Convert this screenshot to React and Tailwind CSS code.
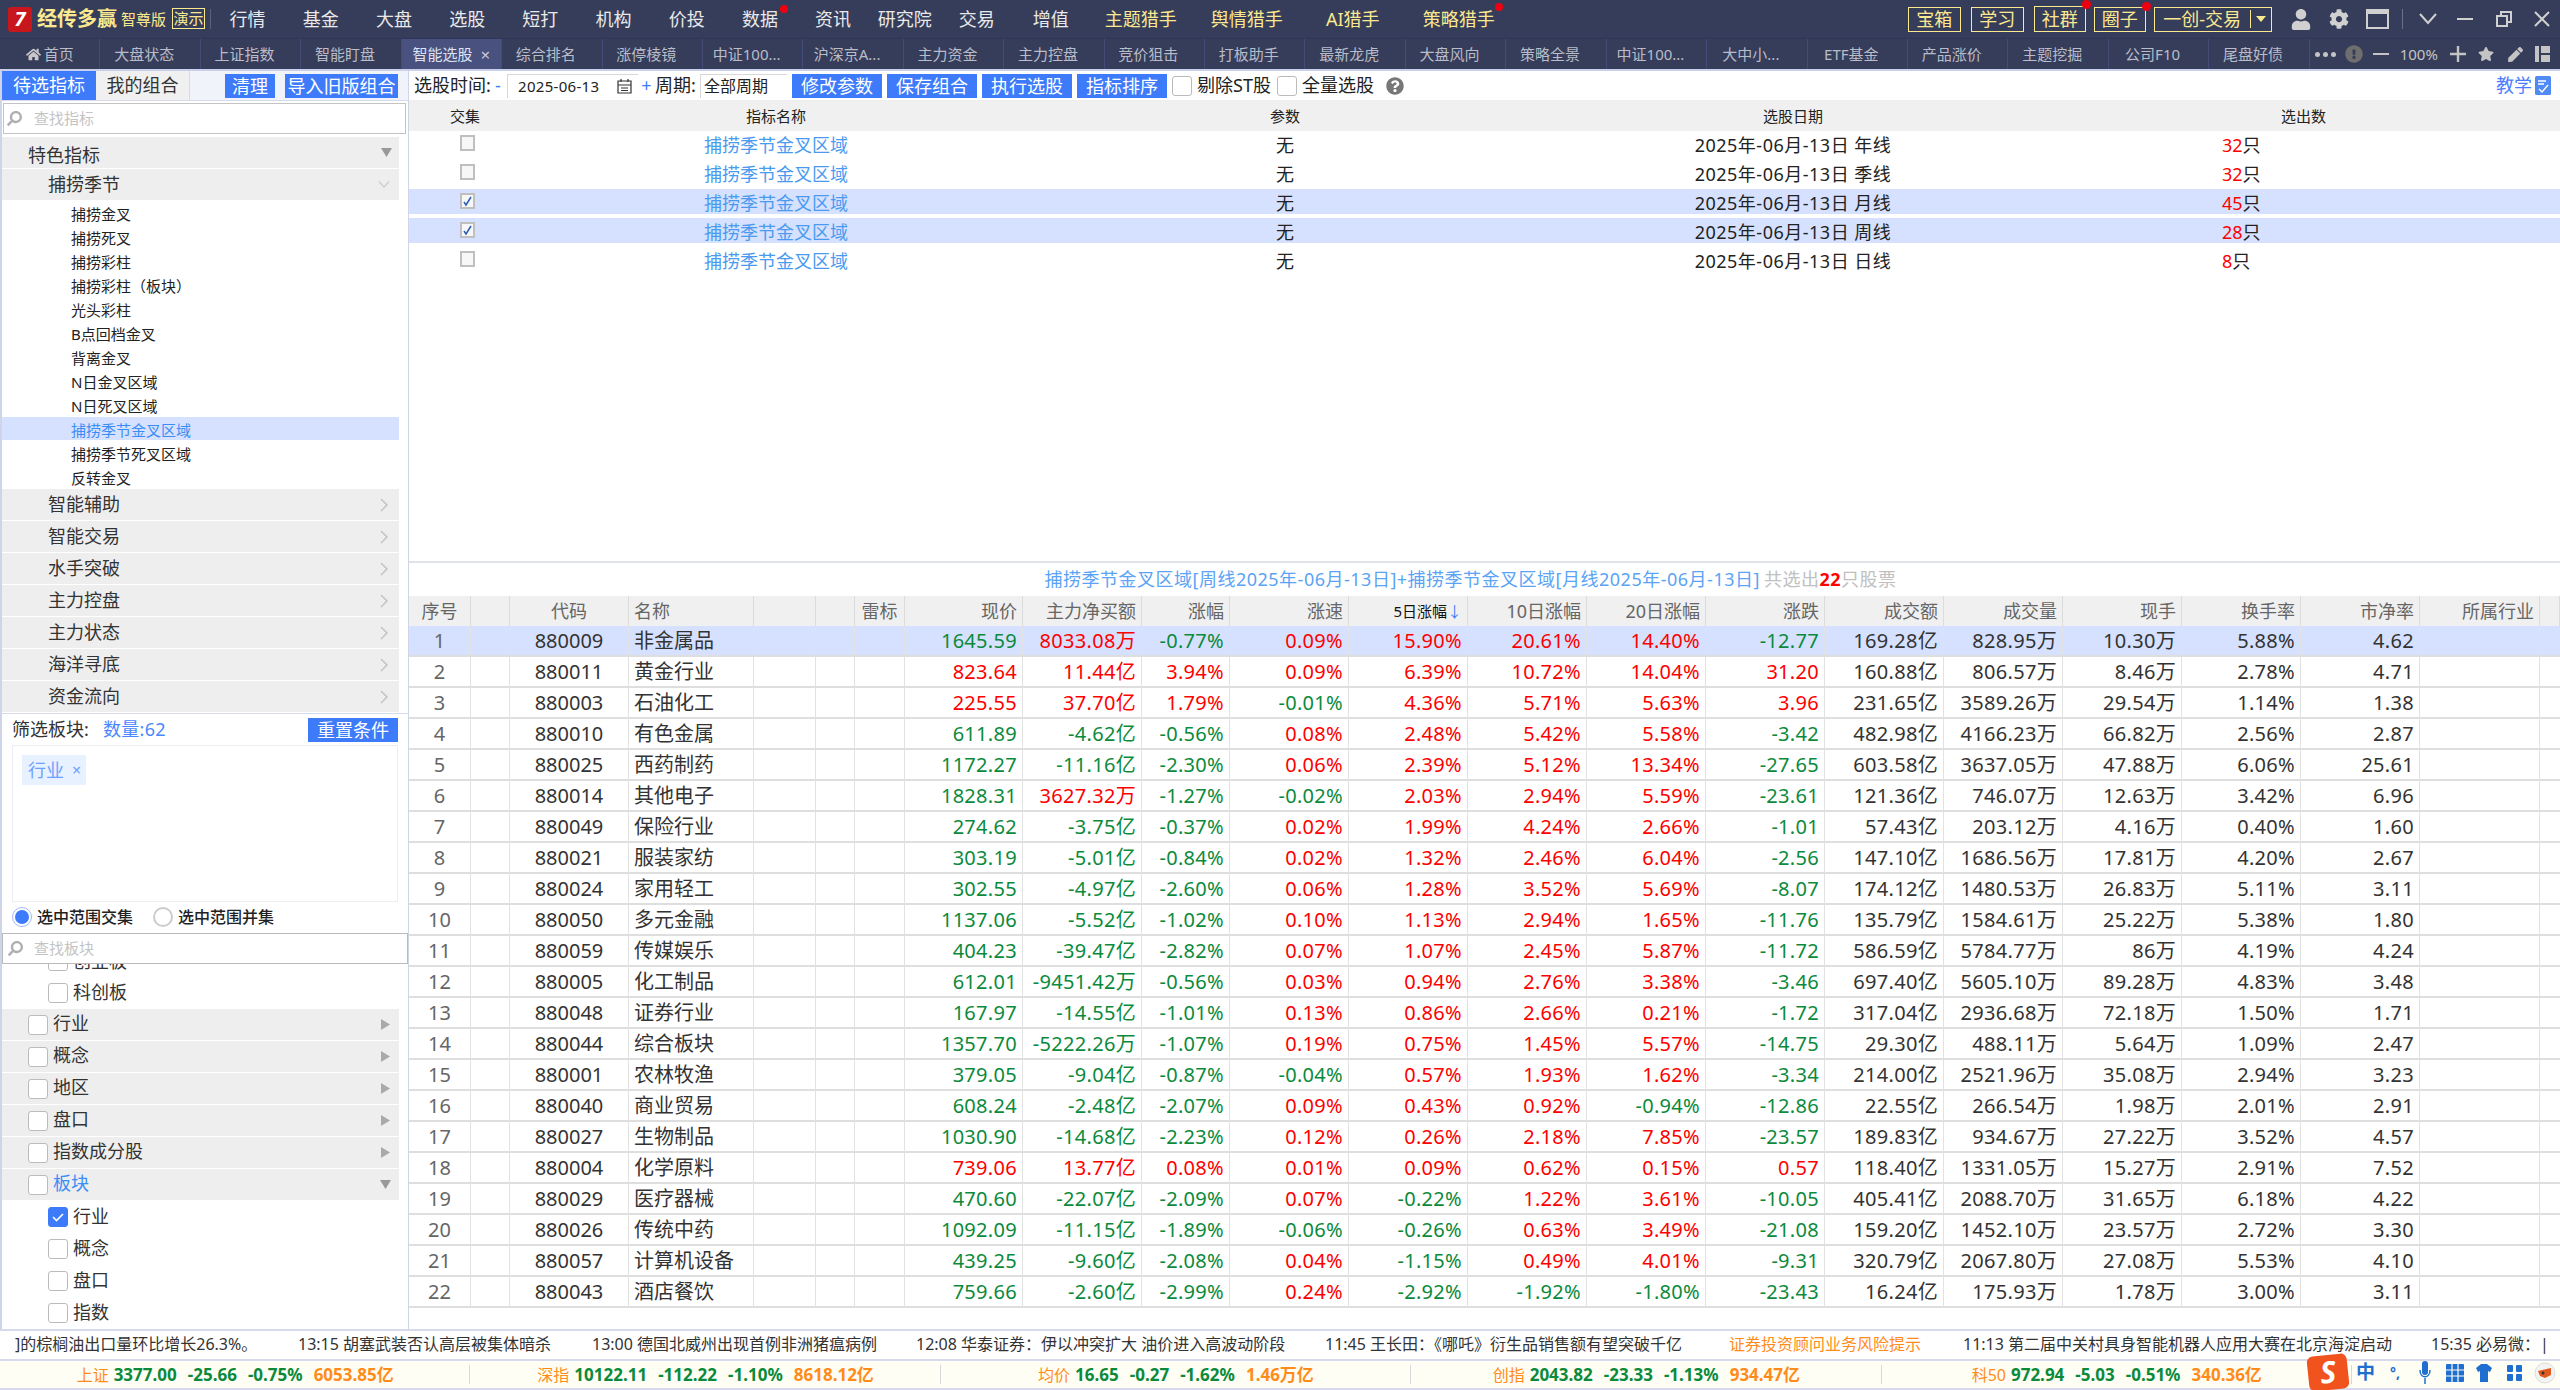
import React from "react";
import { FaCog, FaUser, FaStar, FaPen, FaHome, FaSearch, FaQuestionCircle, FaExclamationCircle } from "react-icons/fa";

const navA = ["行情", "基金", "大盘", "选股", "短打", "机构", "价投", "数据", "资讯"];
const tabs = ["首页", "大盘状态", "上证指数", "智能盯盘", "智能选股", "综合排名", "涨停棱镜", "中证100...", "沪深京A...", "主力资金", "主力控盘", "竞价狙击", "打板助手", "最新龙虎", "大盘风向", "策略全景", "中证100...", "大中小...", "ETF基金", "产品涨价", "主题挖掘", "公司F10", "尾盘好债"];
const items = ["捕捞金叉", "捕捞死叉", "捕捞彩柱", "捕捞彩柱（板块）", "光头彩柱", "B点回档金叉", "背离金叉", "N日金叉区域", "N日死叉区域", "捕捞季节金叉区域", "捕捞季节死叉区域", "反转金叉"];
const sections = ["智能辅助", "智能交易", "水手突破", "主力控盘", "主力状态", "海洋寻底", "资金流向"];
const topRows = [
  ["年线", "32", false], ["季线", "32", false], ["月线", "45", true], ["周线", "28", true], ["日线", "8", false],
];
const raw = `880009 非金属品 1645.59 8033.08万 -0.77% 0.09% 15.90% 20.61% 14.40% -12.77 169.28亿 828.95万 10.30万 5.88% 4.62
880011 黄金行业 823.64 11.44亿 3.94% 0.09% 6.39% 10.72% 14.04% 31.20 160.88亿 806.57万 8.46万 2.78% 4.71
880003 石油化工 225.55 37.70亿 1.79% -0.01% 4.36% 5.71% 5.63% 3.96 231.65亿 3589.26万 29.54万 1.14% 1.38
880010 有色金属 611.89 -4.62亿 -0.56% 0.08% 2.48% 5.42% 5.58% -3.42 482.98亿 4166.23万 66.82万 2.56% 2.87
880025 西药制药 1172.27 -11.16亿 -2.30% 0.06% 2.39% 5.12% 13.34% -27.65 603.58亿 3637.05万 47.88万 6.06% 25.61
880014 其他电子 1828.31 3627.32万 -1.27% -0.02% 2.03% 2.94% 5.59% -23.61 121.36亿 746.07万 12.63万 3.42% 6.96
880049 保险行业 274.62 -3.75亿 -0.37% 0.02% 1.99% 4.24% 2.66% -1.01 57.43亿 203.12万 4.16万 0.40% 1.60
880021 服装家纺 303.19 -5.01亿 -0.84% 0.02% 1.32% 2.46% 6.04% -2.56 147.10亿 1686.56万 17.81万 4.20% 2.67
880024 家用轻工 302.55 -4.97亿 -2.60% 0.06% 1.28% 3.52% 5.69% -8.07 174.12亿 1480.53万 26.83万 5.11% 3.11
880050 多元金融 1137.06 -5.52亿 -1.02% 0.10% 1.13% 2.94% 1.65% -11.76 135.79亿 1584.61万 25.22万 5.38% 1.80
880059 传媒娱乐 404.23 -39.47亿 -2.82% 0.07% 1.07% 2.45% 5.87% -11.72 586.59亿 5784.77万 86万 4.19% 4.24
880005 化工制品 612.01 -9451.42万 -0.56% 0.03% 0.94% 2.76% 3.38% -3.46 697.40亿 5605.10万 89.28万 4.83% 3.48
880048 证券行业 167.97 -14.55亿 -1.01% 0.13% 0.86% 2.66% 0.21% -1.72 317.04亿 2936.68万 72.18万 1.50% 1.71
880044 综合板块 1357.70 -5222.26万 -1.07% 0.19% 0.75% 1.45% 5.57% -14.75 29.30亿 488.11万 5.64万 1.09% 2.47
880001 农林牧渔 379.05 -9.04亿 -0.87% -0.04% 0.57% 1.93% 1.62% -3.34 214.00亿 2521.96万 35.08万 2.94% 3.23
880040 商业贸易 608.24 -2.48亿 -2.07% 0.09% 0.43% 0.92% -0.94% -12.86 22.55亿 266.54万 1.98万 2.01% 2.91
880027 生物制品 1030.90 -14.68亿 -2.23% 0.12% 0.26% 2.18% 7.85% -23.57 189.83亿 934.67万 27.22万 3.52% 4.57
880004 化学原料 739.06 13.77亿 0.08% 0.01% 0.09% 0.62% 0.15% 0.57 118.40亿 1331.05万 15.27万 2.91% 7.52
880029 医疗器械 470.60 -22.07亿 -2.09% 0.07% -0.22% 1.22% 3.61% -10.05 405.41亿 2088.70万 31.65万 6.18% 4.22
880026 传统中药 1092.09 -11.15亿 -1.89% -0.06% -0.26% 0.63% 3.49% -21.08 159.20亿 1452.10万 23.57万 2.72% 3.30
880057 计算机设备 439.25 -9.60亿 -2.08% 0.04% -1.15% 0.49% 4.01% -9.31 320.79亿 2067.80万 27.08万 5.53% 4.10
880043 酒店餐饮 759.66 -2.60亿 -2.99% 0.24% -2.92% -1.92% -1.80% -23.43 16.24亿 175.93万 1.78万 3.00% 3.11`;
const rows = raw.split("\n").map((l) => l.split(" "));

const grid = "grid grid-cols-[62px_39px_119px_125px_62px_39px_50px_118px_119px_88px_repeat(10,119px)_120px_20px]";
const RED = "text-[#ff0000]";
const GREEN = "text-[#0b8a3c]";
const sign = (v) => (v.startsWith("-") ? GREEN : RED);
const cellR = "border-r border-[#e2e2e2] text-right pr-[5px] whitespace-nowrap tracking-[0.3px]";

function Btn({ w, children, cls = "" }) {
  return <div className={`${w} ${cls} h-6 flex items-center justify-center bg-[#3d7bfb] text-white text-[18px] leading-none shrink-0`}>{children}</div>;
}
function Box({ checked }) {
  return (
    <span className={`w-5 h-5 rounded-[3px] border shrink-0 flex items-center justify-center ${checked ? "bg-[#3d7bfb] border-[#3d7bfb]" : "bg-white border-[#bbb]"}`}>
      {checked && (
        <svg width="14" height="14" viewBox="0 0 14 14"><path d="M2 7l3.5 3.5L12 4" stroke="#fff" strokeWidth="1.6" fill="none" /></svg>
      )}
    </span>
  );
}
function TopCheck({ checked }) {
  return (
    <span className="w-[15px] h-4 mt-1 border-2 border-[#bfbfbf] bg-[#f7f7f7] flex items-center justify-center">
      {checked && (
        <svg width="11" height="11" viewBox="0 0 11 11"><path d="M2 6l2 3 5-8" stroke="#2f5fb0" strokeWidth="1.5" fill="none" /></svg>
      )}
    </span>
  );
}
const Chevron = () => (
  <svg width="10" height="14" viewBox="0 0 10 14" className="shrink-0"><path d="M2 1l6 6-6 6" stroke="#c4c4c4" strokeWidth="1.5" fill="none" /></svg>
);
const TriRight = () => (
  <svg width="10" height="11" viewBox="0 0 10 11" className="shrink-0"><path d="M0 0l9 5.5L0 11z" fill="#aaa" /></svg>
);
const TriDown = () => (
  <svg width="11" height="9" viewBox="0 0 11 9" className="shrink-0"><path d="M0 0h11L5.5 9z" fill="#999" /></svg>
);

function Nav() {
  const gold = "text-[#fbe98f]";
  return (
    <div className="h-[38px] bg-[#363d5a] flex items-center text-[18px] text-[#e9e9e9] shrink-0">
      <div className="ml-2 w-6 h-[25px] rounded-[3px] bg-[#c8161d] flex items-center justify-center text-white font-bold italic text-[20px] leading-none shrink-0">7</div>
      <div className={`ml-[5px] text-[20px] font-bold ${gold} w-[84px] whitespace-nowrap`}>经传多赢</div>
      <div className={`text-[15px] ${gold} w-[51px] whitespace-nowrap`}>智尊版</div>
      <div className={`w-[33px] h-[21px] mb-[1px] border border-[#fbe98f] text-[15px] leading-[19px] text-center ${gold} whitespace-nowrap`}>演示</div>
      <div className="ml-[5px] w-px h-[20px] bg-[#5a6080]" />
      {navA.map((t) => (
        <div key={t} className="w-[73.2px] text-center relative shrink-0">
          {t}
          {t === "数据" && <span className="absolute right-[9px] top-[-1px] w-2 h-2 rounded-full bg-[#f0000f]" />}
        </div>
      ))}
      <div className="w-[70px] text-center shrink-0">研究院</div>
      <div className="w-[74px] text-center shrink-0">交易</div>
      <div className="w-[74px] text-center shrink-0">增值</div>
      <div className={`w-[106px] text-center shrink-0 ${gold}`}>主题猎手</div>
      <div className={`w-[106px] text-center shrink-0 ${gold}`}>舆情猎手</div>
      <div className={`w-[106px] text-center shrink-0 ${gold}`}>AI猎手</div>
      <div className={`w-[106px] text-center shrink-0 relative ${gold}`}>
        策略猎手
        <span className="absolute right-[9px] top-[-3px] w-2 h-2 rounded-full bg-[#f0000f]" />
      </div>
      <div className={`ml-[396px] w-[53px] h-[25px] border border-[#fbe98f] leading-[23px] text-center ${gold} shrink-0`}>宝箱</div>
      <div className={`ml-[10px] w-[53px] h-[25px] border border-[#fbe98f] leading-[23px] text-center ${gold} shrink-0`}>学习</div>
      <div className={`ml-[10px] w-[52px] h-[26px] border border-[#fbe98f] leading-[24px] text-center ${gold} shrink-0 relative`}>
        社群
        <span className="absolute right-[-6px] top-[-7px] w-[9px] h-[9px] rounded-full bg-[#f0000f]" />
      </div>
      <div className={`ml-2 w-[52px] h-[25px] border border-[#fbe98f] leading-[23px] text-center ${gold} shrink-0 relative`}>
        圈子
        <span className="absolute right-[-6px] top-[-6px] w-[9px] h-[9px] rounded-full bg-[#f0000f]" />
      </div>
      <div className={`ml-2 w-[118px] h-[25px] border border-[#fbe98f] flex items-center ${gold} shrink-0`}>
        <span className="w-[95px] text-center whitespace-nowrap">一创-交易</span>
        <span className="w-px h-[18px] bg-[#fbe98f]" />
        <svg width="10" height="6" viewBox="0 0 10 6" className="ml-[5px]"><path d="M0 0h10L5 6z" fill="#fbe98f" /></svg>
      </div>
      <FaUser className="ml-[19px] w-5 h-[21px] text-[#d0d0d0] shrink-0" />
      <FaCog className="ml-[18px] w-5 h-5 text-[#d0d0d0] shrink-0" />
      <div className="ml-[17px] w-[23px] h-[20px] border-2 border-t-[5px] border-[#d0d0d0] shrink-0" />
      <div className="ml-[13px] w-px h-[20px] bg-[#6a7090] shrink-0" />
      <svg width="18" height="12" viewBox="0 0 18 12" className="ml-[16px] shrink-0"><path d="M1 1l8 9 8-9" stroke="#d0d0d0" strokeWidth="2" fill="none" /></svg>
      <div className="ml-5 w-[16px] h-[2px] bg-[#d0d0d0] shrink-0" />
      <svg width="16" height="16" viewBox="0 0 16 16" className="ml-[23px] shrink-0"><path d="M1 5h10v10H1zM5 5V1h10v10h-4" stroke="#d0d0d0" strokeWidth="2" fill="none" /></svg>
      <svg width="16" height="16" viewBox="0 0 16 16" className="ml-[22px] shrink-0"><path d="M1 1l14 14M15 1L1 15" stroke="#d0d0d0" strokeWidth="2" fill="none" /></svg>
    </div>
  );
}

function Tabs() {
  return (
    <div className="h-[33px] shrink-0 bg-[#363d5a] border-t border-[#2e3658] border-b-2 border-b-[#c8d0ea] flex text-[15px] text-[#b9bcc9]">
      {tabs.map((t, i) => (
        <div key={i} className={`w-[100.43px] shrink-0 border-r border-[#434c78] flex items-center justify-center whitespace-nowrap ${i === 4 ? "bg-[#49527e] text-[#dfe3f5]" : ""} ${i !== 0 && i !== 4 ? "pr-[12px]" : ""}`}>
          {i === 0 && <FaHome className="w-[15px] h-[15px] mr-[3px] text-[#c8c8c8]" />}
          {t}
          {i === 4 && <span className="ml-[8px] text-[#c8c8d8] text-[17px] leading-none">×</span>}
        </div>
      ))}
      <div className="flex items-center text-[#c4c4c4] flex-1 pl-[5px]">
        <span className="flex gap-[3px] shrink-0">
          <i className="w-[5px] h-[5px] rounded-full bg-[#c4c4c4]" />
          <i className="w-[5px] h-[5px] rounded-full bg-[#c4c4c4]" />
          <i className="w-[5px] h-[5px] rounded-full bg-[#c4c4c4]" />
        </span>
        <FaExclamationCircle className="ml-[9px] w-[18px] h-[18px] text-[#6e6e6e] shrink-0" />
        <span className="ml-[10px] w-4 h-[2px] bg-[#c4c4c4] shrink-0" />
        <span className="ml-[11px] w-[40px] text-[15px] whitespace-nowrap">100%</span>
        <svg width="16" height="16" viewBox="0 0 16 16" className="ml-[10px] shrink-0"><path d="M8 0v16M0 8h16" stroke="#c4c4c4" strokeWidth="2.4" /></svg>
        <FaStar className="ml-3 w-4 h-4 shrink-0" />
        <FaPen className="ml-[14px] w-[15px] h-[15px] shrink-0" />
        <svg width="15" height="16" viewBox="0 0 15 16" className="ml-3 shrink-0"><path d="M0 0h4v16H0zM6 0h9v7H6zM6 9h9v7H6z" fill="#c4c4c4" /></svg>
      </div>
    </div>
  );
}

function Sidebar() {
  return (
    <div className="w-[409px] shrink-0 border-l-2 border-r border-[#d0d4e8] flex flex-col bg-white text-[#333]">
      <div className="h-[30px] shrink-0 flex items-center bg-[#f1f3fb] border-b border-[#d6daec] text-[18px]">
        <div className="w-[94px] h-full bg-[#3d7bfb] text-white flex items-center justify-center shrink-0">待选指标</div>
        <div className="w-[94px] h-full bg-[#f0f0f0] text-[#333] flex items-center justify-center border-r border-[#d6daec] shrink-0">我的组合</div>
        <Btn w="w-[50px]" cls="ml-[35px]">清理</Btn>
        <Btn w="w-[113px]" cls="ml-[10px]">导入旧版组合</Btn>
      </div>
      <div className="h-[31px] shrink-0 mt-[2px] ml-px mr-[2px] border border-[#c4c4c4] flex items-center text-[15px] text-[#c4c4c4]">
        <FaSearch className="ml-[3px] w-[15px] h-[15px] text-[#b0b0b0]" style={{ transform: "scaleX(-1)" }} />
        <span className="ml-[12px]">查找指标</span>
      </div>
      <div className="mt-[3px] mr-[9px] flex flex-col">
        <div className="h-[31px] bg-[#eeeeee] flex items-center justify-between pl-[26px] pr-[7px] text-[18px] mb-px">
          <span className="pt-[5px] leading-none">特色指标</span>
          <TriDown />
        </div>
        <div className="h-[31px] bg-[#eeeeee] flex items-center justify-between pl-[46px] pr-[9px] text-[18px] mb-px">
          <span>捕捞季节</span>
          <svg width="12" height="7" viewBox="0 0 12 7"><path d="M1 0.5l5 5.5 5-5.5" stroke="#ccc" strokeWidth="1.2" fill="none" /></svg>
        </div>
        {items.map((t) => {
          const on = t === "捕捞季节金叉区域";
          return (
            <div key={t} className={`h-[23px] mb-px pl-[69px] text-[15px] leading-[26px] whitespace-nowrap ${on ? "bg-[#d5e1ff] text-[#3b8df5]" : "text-[#222]"}`}>{t}</div>
          );
        })}
        {sections.map((t) => (
          <div key={t} className="h-[31px] mb-px bg-[#eeeeee] flex items-center justify-between pl-[46px] pr-[10px] text-[18px]">
            <span>{t}</span>
            <Chevron />
          </div>
        ))}
      </div>
      <div className="h-[32px] shrink-0 border-t border-[#d6daec] flex items-center pl-[10px] pr-[10px] text-[18px]">
        <span className="w-[91px]">筛选板块:</span>
        <span className="text-[#4a86ff] tracking-[0.3px]">数量:62</span>
        <Btn w="w-[90px]" cls="ml-auto">重置条件</Btn>
      </div>
      <div className="h-[157px] shrink-0 ml-[10px] mr-[10px] border border-[#eceef4] pt-[9px] pl-[9px]">
        <span className="inline-flex w-[64px] h-[30px] bg-[#e8f1ff] text-[#6ea0ff] text-[18px] items-center pl-[6px]">
          行业<span className="ml-2 text-[16px]">×</span>
        </span>
      </div>
      <div className="h-[31px] shrink-0 flex items-center pl-[10px] pb-px text-[16px] font-medium text-[#222]">
        <span className="w-5 h-5 rounded-full border border-[#9db8fb] bg-white flex items-center justify-center"><i className="w-[14px] h-[14px] rounded-full bg-[#3d7bfb]" /></span>
        <span className="ml-[5px] w-[116px]">选中范围交集</span>
        <span className="w-5 h-5 rounded-full border-2 border-[#ccc] bg-white" />
        <span className="ml-[5px]">选中范围并集</span>
      </div>
      <div className="h-[31px] shrink-0 border border-[#bbb] flex items-center text-[15px] text-[#c4c4c4]">
        <FaSearch className="ml-[5px] w-[15px] h-[15px] text-[#b0b0b0]" style={{ transform: "scaleX(-1)" }} />
        <span className="ml-[11px]">查找板块</span>
      </div>
      <div className="flex-1 overflow-hidden mr-[9px] text-[18px]">
        <div className="-mt-[19px] h-8 flex items-center pl-[46px]"><Box /><span className="ml-[5px]">创业板</span></div>
        <div className="h-8 flex items-center pl-[46px] leading-[24px]"><Box /><span className="ml-[5px] pb-[2px]">科创板</span></div>
        {["行业", "概念", "地区", "盘口", "指数成分股"].map((t) => (
          <div key={t} className="h-[31px] mb-px bg-[#eeeeee] flex items-center pl-[26px] pr-[8px]">
            <Box />
            <span className="ml-[5px] flex-1 pb-[2px]">{t}</span>
            <TriRight />
          </div>
        ))}
        <div className="h-[31px] mb-px bg-[#eeeeee] flex items-center pl-[26px] pr-[8px]">
          <Box />
          <span className="ml-[5px] flex-1 pb-[2px] text-[#3b8df5]">板块</span>
          <TriDown />
        </div>
        {["行业", "概念", "盘口", "指数"].map((t, i) => (
          <div key={t} className="h-8 flex items-center pl-[46px]">
            <Box checked={i === 0} />
            <span className="ml-[5px] pb-[2px]">{t}</span>
          </div>
        ))}
      </div>
    </div>
  );
}

function Toolbar() {
  return (
    <div className="h-[30px] shrink-0 flex items-center text-[18px] text-[#222] whitespace-nowrap border-b border-[#eeeeee]">
      <span className="w-[86px] pl-[5px] shrink-0">选股时间:</span>
      <span className="w-3 text-[#3d7bfb] shrink-0">-</span>
      <div className="w-[131px] h-6 shrink-0 border-t border-l border-[#d8d8d8] flex items-center pl-[10px] text-[15px] tracking-[0.3px]">
        <span className="w-[99px]">2025-06-13</span>
        <svg width="15" height="16" viewBox="0 0 15 16"><path d="M1 3h13v12H1zM1 7h13M4 1v3M11 1v3M4 10h7M4 12.5h7" stroke="#333" strokeWidth="1.2" fill="none" /></svg>
      </div>
      <span className="w-[17px] text-center text-[#3d7bfb] shrink-0">+</span>
      <span className="w-[45px] shrink-0">周期:</span>
      <div className="w-[87px] h-6 shrink-0 border-t border-l border-[#d8d8d8] flex items-center pl-[3px] text-[16px]">全部周期</div>
      <Btn w="w-[90px]" cls="ml-[5px]">修改参数</Btn>
      <Btn w="w-[90px]" cls="ml-[5px]">保存组合</Btn>
      <Btn w="w-[90px]" cls="ml-[5px]">执行选股</Btn>
      <Btn w="w-[90px]" cls="ml-[5px]">指标排序</Btn>
      <span className="ml-[5px]"><Box /></span>
      <span className="ml-[5px] w-[74px]">剔除ST股</span>
      <span className="ml-[6px]"><Box /></span>
      <span className="ml-[5px] w-[73px]">全量选股</span>
      <FaQuestionCircle className="ml-[11px] w-[18px] h-[18px] text-[#777]" />
      <span className="ml-auto text-[#4a7dff]">教学</span>
      <svg width="16" height="19" viewBox="0 0 16 19" className="ml-[3px] mr-[9px]">
        <rect width="16" height="19" rx="1.5" fill="#4f8af5" />
        <path d="M3 5h8M3 8h6M4 13l3 3 6-7" stroke="#fff" strokeWidth="1.3" fill="none" />
      </svg>
    </div>
  );
}

function TopTable() {
  return (
    <div className="h-[462px] shrink-0 border-b-2 border-[#e0e2ea]">
      <div className="grid grid-cols-[112px_510px_508px_508px_1fr] h-[30px] bg-[#f0f0f0] text-[15px] text-[#222] items-center text-center">
        <div>交集</div><div>指标名称</div><div>参数</div><div>选股日期</div><div>选出数</div>
      </div>
      {topRows.map(([p, n, on]) => (
        <div key={p} className={`grid grid-cols-[112px_510px_508px_508px_1fr] h-[25px] mb-1 text-[18px] leading-[29px] text-center whitespace-nowrap ${on ? "bg-[#d5e1ff]" : ""}`}>
          <div className="flex justify-center pl-1 items-start"><TopCheck checked={on} /></div>
          <div className="text-[#4a9bf0]">捕捞季节金叉区域</div>
          <div className="text-[#222]">无</div>
          <div className="text-[#222] tracking-[0.5px]">2025年-06月-13日 {p}</div>
          <div className="text-left pl-[175px] text-[#222]"><span className={RED}>{n}</span>只</div>
        </div>
      ))}
    </div>
  );
}

function StockTable() {
  const heads = ["序号", "", "代码", "名称", "", "", "雷标", "现价", "主力净买额", "涨幅", "涨速", "5日涨幅", "10日涨幅", "20日涨幅", "涨跌", "成交额", "成交量", "现手", "换手率", "市净率", "所属行业", ""];
  return (
    <div className="flex-1 min-h-0">
      <div className="h-[33px] text-[18px] leading-[33px] text-center whitespace-nowrap pr-[28px] tracking-[0.5px]">
        <span className="text-[#5ba3f5]">捕捞季节金叉区域[周线2025年-06月-13日]+捕捞季节金叉区域[月线2025年-06月-13日]</span>
        <span className="text-[#c0c0c0] ml-1">共选出</span>
        <span className="text-[#ff0000] font-bold">22</span>
        <span className="text-[#c0c0c0]">只股票</span>
      </div>
      <div className={`${grid} h-[30px] bg-[#f0f0f0] text-[18px] text-[#666] leading-[30px] whitespace-nowrap`}>
        {heads.map((h, i) => {
          const align = i < 3 || i === 6 ? "text-center" : i === 3 ? "text-left pl-[5px]" : "text-right pr-[5px]";
          if (h === "5日涨幅") {
            return (
              <div key={i} className={`border-r border-[#dcdcdc] ${align} text-[15px] text-[#111]`}>
                5日涨幅<span className="text-[#3d7bfb]">↓</span>
              </div>
            );
          }
          return <div key={i} className={`border-r border-[#dcdcdc] ${align}`}>{h}</div>;
        })}
      </div>
      {rows.map((r, idx) => {
        const [code, name, price, net, chg, speed, d5, d10, d20, diff, amt, vol, hand, turn, pb] = r;
        return (
          <div key={code} className={`${grid} h-[31px] text-[20px] leading-[30px] border-b-2 border-[#dedede] text-[#333] ${idx === 0 ? "bg-[#d5e1ff]" : ""}`}>
            <div className="border-r border-[#e2e2e2] text-center text-[#666]">{idx + 1}</div>
            <div className="border-r border-[#e2e2e2]" />
            <div className="border-r border-[#e2e2e2] text-center">{code}</div>
            <div className="border-r border-[#e2e2e2] pl-[5px] whitespace-nowrap overflow-hidden">{name}</div>
            <div className="border-r border-[#e2e2e2]" />
            <div className="border-r border-[#e2e2e2]" />
            <div className="border-r border-[#e2e2e2]" />
            <div className={`${cellR} ${sign(chg)}`}>{price}</div>
            <div className={`${cellR} ${sign(net)}`}>{net}</div>
            <div className={`${cellR} ${sign(chg)}`}>{chg}</div>
            <div className={`${cellR} ${sign(speed)}`}>{speed}</div>
            <div className={`${cellR} ${sign(d5)}`}>{d5}</div>
            <div className={`${cellR} ${sign(d10)}`}>{d10}</div>
            <div className={`${cellR} ${sign(d20)}`}>{d20}</div>
            <div className={`${cellR} ${sign(diff)}`}>{diff}</div>
            <div className={cellR}>{amt}</div>
            <div className={cellR}>{vol}</div>
            <div className={cellR}>{hand}</div>
            <div className={cellR}>{turn}</div>
            <div className={cellR}>{pb}</div>
            <div className="border-r border-[#e2e2e2]" />
            <div />
          </div>
        );
      })}
    </div>
  );
}

function Ticker() {
  return (
    <div className="h-[30px] shrink-0 border-t-2 border-[#d6daec] flex items-center pb-[2px] text-[16px] text-[#333] whitespace-nowrap overflow-hidden pl-[15px]">
      <span className="w-[283px] shrink-0">]的棕榈油出口量环比增长26.3%。</span>
      <span className="w-[294px] shrink-0">13:15 胡塞武装否认高层被集体暗杀</span>
      <span className="w-[324px] shrink-0">13:00 德国北威州出现首例非洲猪瘟病例</span>
      <span className="w-[409px] shrink-0">12:08 华泰证券：伊以冲突扩大 油价进入高波动阶段</span>
      <span className="w-[404px] shrink-0">11:45 王长田：《哪吒》衍生品销售额有望突破千亿</span>
      <span className="w-[234px] shrink-0 text-[#ff8c1a]">证券投资顾问业务风险提示</span>
      <span className="w-[468px] shrink-0">11:13 第二届中关村具身智能机器人应用大赛在北京海淀启动</span>
      <span className="shrink-0">15:35 必易微：|</span>
    </div>
  );
}

function Stat({ n, a, b, c, d }) {
  return (
    <div className="w-[470.4px] shrink-0 h-full flex items-center justify-center gap-[11px] text-[17px] font-bold whitespace-nowrap relative">
      <span className="text-[#ff8c1a] font-normal -mr-[6px] text-[16px]">{n}</span>
      <span className="text-[#0b8a3c]">{a}</span>
      <span className="text-[#0b8a3c]">{b}</span>
      <span className="text-[#0b8a3c]">{c}</span>
      <span className="text-[#ff8c1a]">{d}</span>
      <span className="absolute right-0 top-[4px] bottom-[4px] w-px bg-[#d8d8d8]" />
    </div>
  );
}

function Status() {
  return (
    <div className="h-[31px] shrink-0 border-t-2 border-b-2 border-[#d6daec] bg-[#fffef4] flex relative overflow-visible">
      <Stat n="上证" a="3377.00" b="-25.66" c="-0.75%" d="6053.85亿" />
      <Stat n="深指" a="10122.11" b="-112.22" c="-1.10%" d="8618.12亿" />
      <Stat n="均价" a="16.65" b="-0.27" c="-1.62%" d="1.46万亿" />
      <Stat n="创指" a="2043.82" b="-23.33" c="-1.13%" d="934.47亿" />
      <Stat n="科50" a="972.94" b="-5.03" c="-0.51%" d="340.36亿" />
      <div className="absolute left-[2308px] bottom-[-2px] w-[252px] h-[35px] flex items-center">
        <span className="w-[40px] h-[35px] bg-[#f0531e] rounded-[6px] text-white font-bold italic text-[30px] leading-[33px] text-center -rotate-[6deg] shrink-0">S</span>
        <span className="ml-2 w-5 text-[#1f6fd0] text-[19px] leading-[35px] font-bold shrink-0">中</span>
        <span className="ml-[14px] w-3 text-[#1f6fd0] text-[14px] leading-[30px] font-bold shrink-0">°,</span>
        <svg width="12" height="24" viewBox="0 0 12 24" className="ml-[17px] shrink-0"><rect x="3" width="6" height="14" rx="3" fill="#1f6fd0" /><path d="M1 9c0 9 10 9 10 0M6 17v6" stroke="#1f6fd0" strokeWidth="1.5" fill="none" /></svg>
        <svg width="18" height="18" viewBox="0 0 18 18" className="ml-[15px] shrink-0"><rect width="18" height="18" rx="1" fill="#1f6fd0" /><path d="M0 6h18M0 12h18M6 0v18M12 0v18" stroke="#fffef4" strokeWidth="1.2" /></svg>
        <svg width="16" height="18" viewBox="0 0 16 18" className="ml-3 shrink-0"><path d="M5 0h6l5 4-2 4-2-1v11H4V7L2 8 0 4z" fill="#1f6fd0" /></svg>
        <svg width="15" height="16" viewBox="0 0 15 16" className="ml-[15px] shrink-0"><rect width="6" height="7" rx="1" fill="#1f6fd0" /><rect x="9" width="6" height="7" rx="1" fill="#1f6fd0" /><rect y="9" width="6" height="7" rx="1" fill="#1f6fd0" /><rect x="9" y="9" width="6" height="7" rx="1" fill="#1f6fd0" /></svg>
        <svg width="22" height="22" viewBox="0 0 22 22" className="ml-3 shrink-0"><circle cx="11" cy="11" r="10" fill="#f3f3f3" stroke="#ddd" /><path d="M4 9l13-3v7l-6 3-5-2z" fill="#e05a20" /><circle cx="9" cy="11" r="1.5" fill="#333" /></svg>
      </div>
    </div>
  );
}

export default function App() {
  return (
    <div className="w-[2560px] h-[1390px] overflow-hidden flex flex-col bg-white [font-family:'Noto_Sans','Noto_Sans_CJK_SC',sans-serif]">
      <Nav />
      <Tabs />
      <div className="flex flex-1 min-h-0">
        <Sidebar />
        <div className="flex-1 min-w-0 flex flex-col">
          <Toolbar />
          <TopTable />
          <StockTable />
        </div>
      </div>
      <Ticker />
      <Status />
    </div>
  );
}
